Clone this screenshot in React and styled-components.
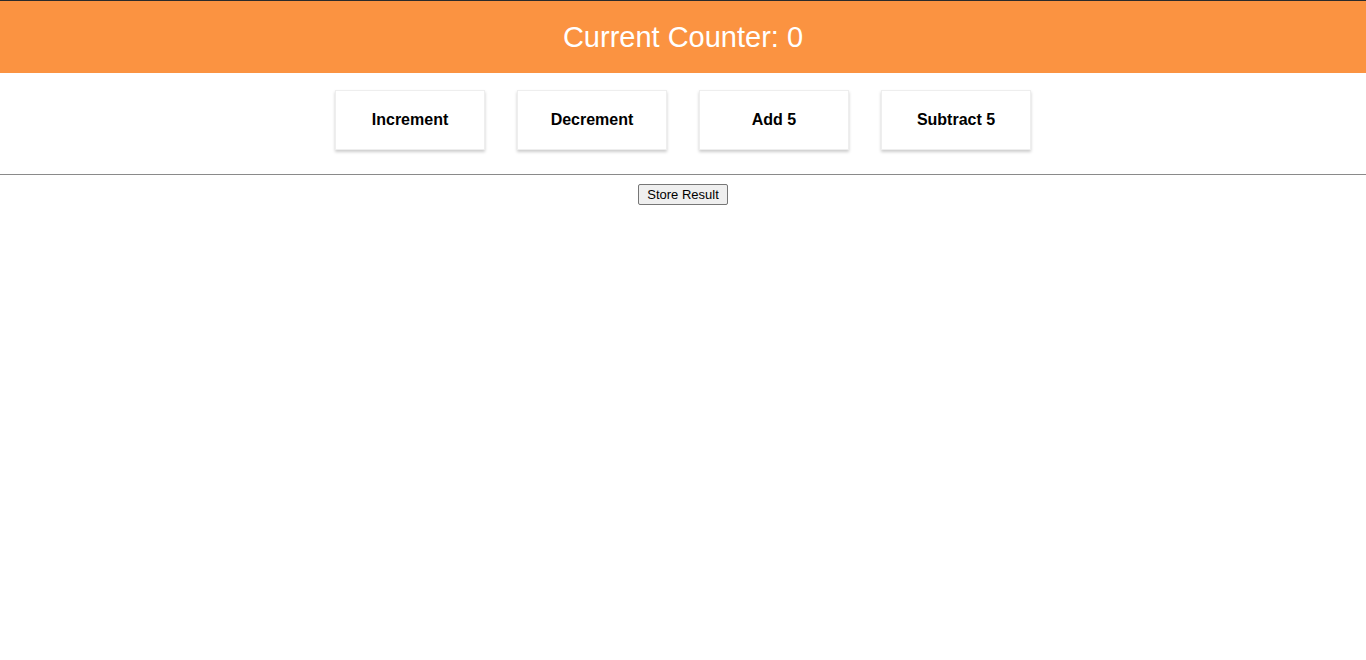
import React from 'react'
import styled, {createGlobalStyle} from 'styled-components'

const GlobalStyle = createGlobalStyle`
    body {
        margin: 0;
        font-family: "Liberation Sans", Arial, sans-serif;
        background: #fff;
        border-top: 1px solid #2b2b2b;
    }
`

const Header = styled.div`
    height: 72px;
    background: #fb9341;
    color: #fff;
    display: flex;
    align-items: center;
    justify-content: center;
    font-size: 29px;
    padding-top: 1px;
    box-sizing: border-box;
`

const Controls = styled.div`
    display: flex;
    justify-content: center;
    gap: 32px;
    padding: 17px 0 0;
`

const ControlButton = styled.div`
    box-sizing: border-box;
    width: 150px;
    height: 60px;
    border: 1px solid #eee;
    box-shadow: 0 2px 3px #ccc;
    display: flex;
    align-items: center;
    justify-content: center;
    font-weight: bold;
    font-size: 16px;
    color: #000;
    cursor: pointer;
`

const Divider = styled.hr`
    margin: 24px 0 0;
    border: none;
    border-top: 1px solid #8a8a8a;
`

const ResultRow = styled.div`
    display: flex;
    justify-content: center;
    padding-top: 9px;
`

const StoreButton = styled.button`
    font-family: "Liberation Sans", Arial, sans-serif;
    font-size: 13px;
    height: 21px;
    padding: 0 8px;
    background: #efefef;
    border: 1px solid #767676;
    border-radius: 2px;
    color: #000;
`

const controls = ['Increment', 'Decrement', 'Add 5', 'Subtract 5']

export default function App() {
    return (
        <>
            <GlobalStyle />
            <Header>Current Counter: 0</Header>
            <Controls>
                {controls.map(label => <ControlButton key={label}>{label}</ControlButton>)}
            </Controls>
            <Divider />
            <ResultRow>
                <StoreButton>Store Result</StoreButton>
            </ResultRow>
        </>
    )
}
